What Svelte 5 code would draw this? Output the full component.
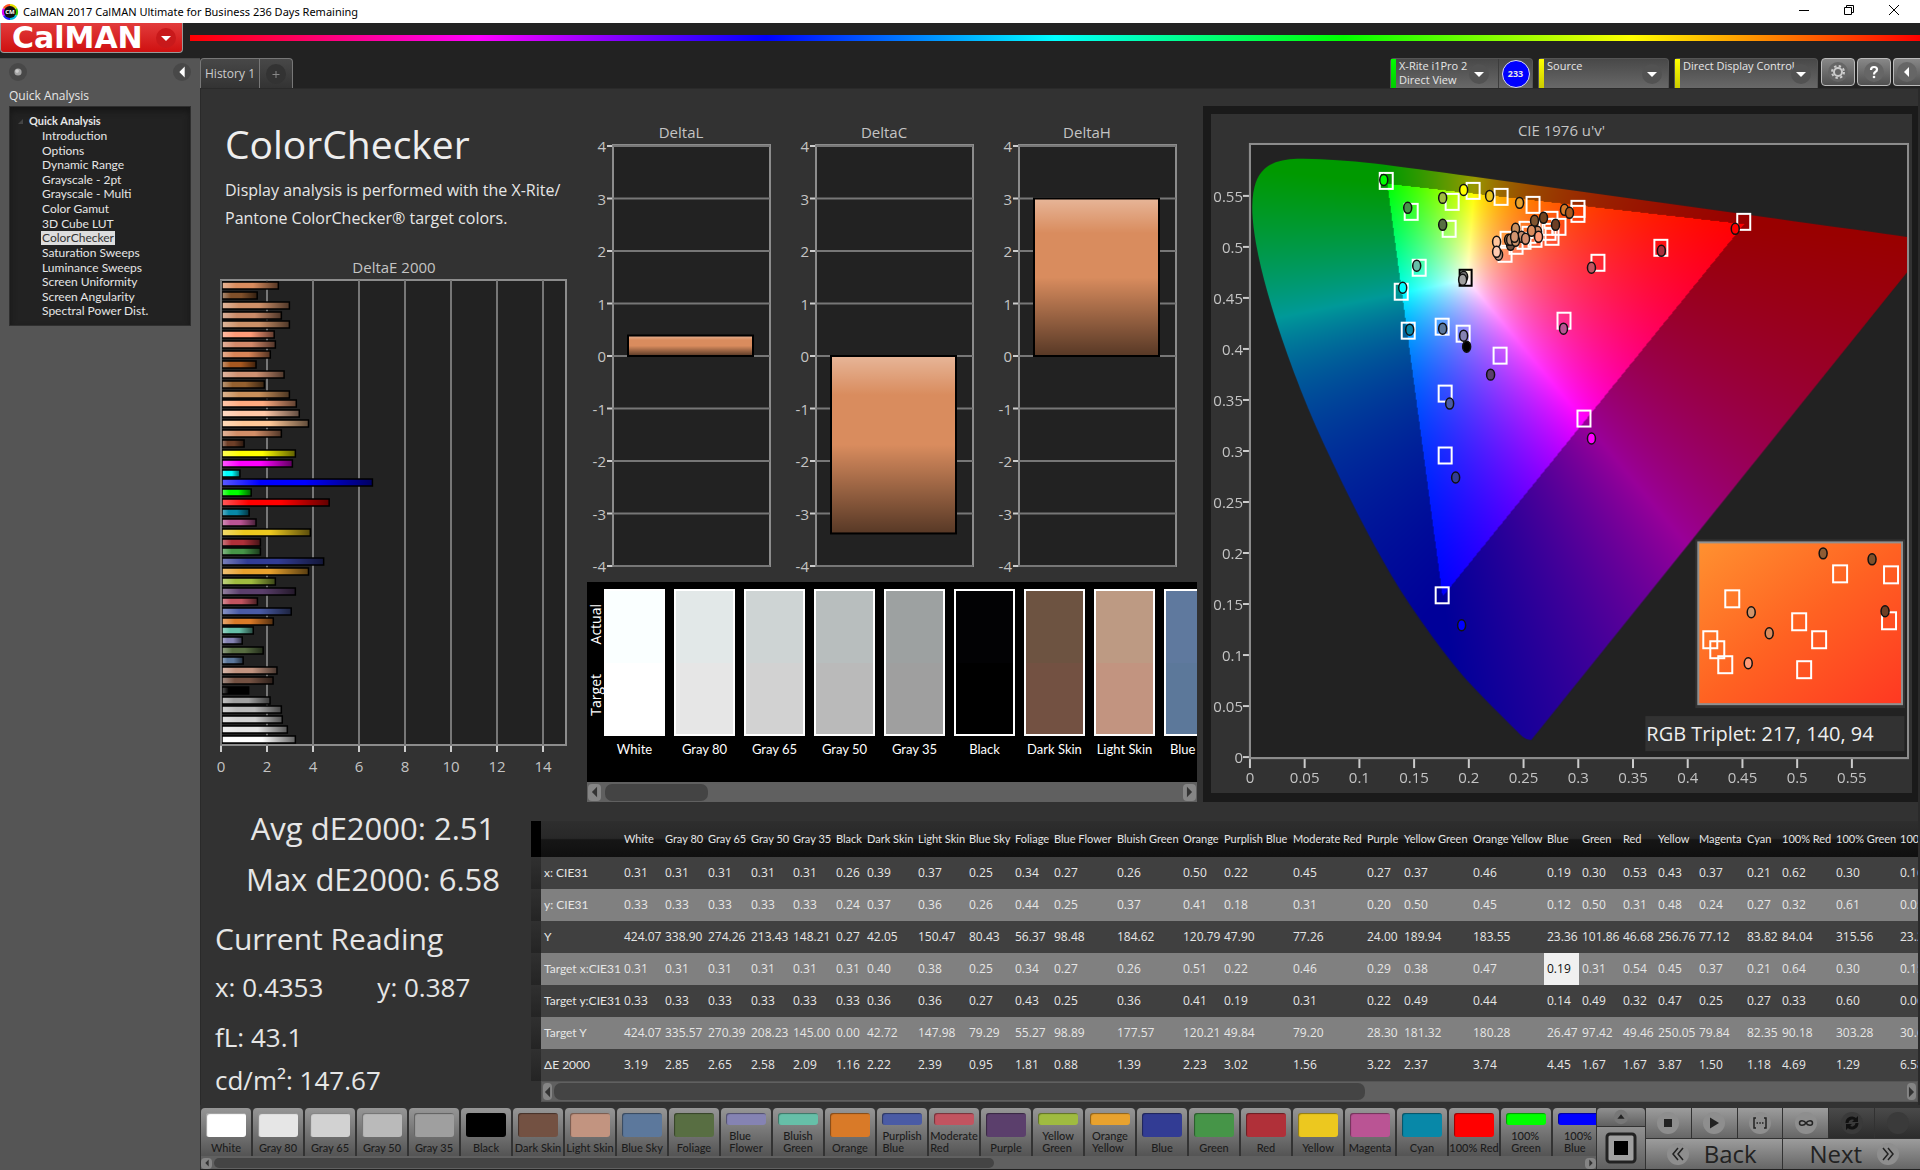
<script>
  import { onMount } from 'svelte';

  const pages = ['Introduction', 'Options', 'Dynamic Range', 'Grayscale - 2pt', 'Grayscale - Multi', 'Color Gamut', '3D Cube LUT', 'ColorChecker', 'Saturation Sweeps', 'Luminance Sweeps', 'Screen Uniformity', 'Screen Angularity', 'Spectral Power Dist.'];

  /* DeltaE 2000 per patch, top to bottom: [value, colour] */
  const deltaE = [
    [2.45, '#d98c5e'], [1.53, '#7f4f2a'], [2.93, '#cf9069'], [2.58, '#c98a68'], [2.93, '#cb9068'], [2.27, '#ff9b78'],
    [2.32, '#d3896a'], [2.1, '#d98558'], [1.48, '#a85820'], [2.7, '#d09272'], [1.84, '#94602f'], [2.93, '#c98f5a'],
    [3.23, '#ffab80'], [3.36, '#ffc8a8'], [3.76, '#ffc898'], [2.58, '#d28e68'], [0.96, '#6e3f28'], [3.19, '#ffff00'],
    [3.06, '#ff00ff'], [0.78, '#00ffff'], [6.54, '#0000ff'], [1.27, '#00ff00'], [4.66, '#ff0000'], [1.18, '#0888a8'],
    [1.48, '#ba5494'], [3.84, '#ecc81f'], [1.67, '#b03039'], [1.67, '#469548'], [4.42, '#323c94'], [3.76, '#e8a22e'],
    [2.32, '#9fbb40'], [3.19, '#5b3f6c'], [1.54, '#c25460'], [3.01, '#4a5ba5'], [2.23, '#d97a28'], [1.36, '#66bfa8'],
    [0.88, '#8583b3'], [1.79, '#586e42'], [0.92, '#5c789c'], [2.39, '#c29480'], [2.22, '#735142'], [1.16, '#000000'],
    [2.09, '#a0a0a0'], [2.58, '#bababa'], [2.62, '#d2d2d2'], [2.84, '#e6e6e6'], [3.19, '#ffffff']
  ];
  const deltas = [['DeltaL', 0.39], ['DeltaC', -3.38], ['DeltaH', 3]];
  const levels = [4, 3, 2, 1, 0, -1, -2, -3, -4];

  /* [name, measured colour, target colour] */
  const strip = [
    ['White', '#faffff', '#ffffff'], ['Gray 80', '#e2e8e8', '#e6e6e6'], ['Gray 65', '#ced4d4', '#d2d2d2'],
    ['Gray 50', '#b8bebe', '#bababa'], ['Gray 35', '#9da1a1', '#9f9f9f'], ['Black', '#020204', '#000000'],
    ['Dark Skin', '#6d5341', '#735142'], ['Light Skin', '#bd9a83', '#c29480'], ['Blue Sky', '#5f799e', '#5c789a']
  ];

  const patches = [
    ['White', '#ffffff'], ['Gray 80', '#e6e6e6'], ['Gray 65', '#d2d2d2'], ['Gray 50', '#bababa'], ['Gray 35', '#9f9f9f'],
    ['Black', '#000000'], ['Dark Skin', '#735142'], ['Light Skin', '#c29480'], ['Blue Sky', '#5c789c'], ['Foliage', '#586e42'],
    ['Blue Flower', '#8583b3'], ['Bluish Green', '#66bfa8'], ['Orange', '#d97a28'], ['Purplish Blue', '#4a5ba5'],
    ['Moderate Red', '#c25460'], ['Purple', '#5b3f6c'], ['Yellow Green', '#9fbb40'], ['Orange Yellow', '#e8a22e'],
    ['Blue', '#323c94'], ['Green', '#469548'], ['Red', '#b03039'], ['Yellow', '#ecc81f'], ['Magenta', '#ba5494'],
    ['Cyan', '#0888a8'], ['100% Red', '#ff0000'], ['100% Green', '#00ff00'], ['100% Blue', '#0000ff']
  ];
  const twoLines = (name) => /^(Blue F|Bluish|Purplish|Moderate|Yellow G|Orange Y|100% [GB])/.test(name);

  const colWidths = [80, 41, 43, 43, 42, 43, 31, 51, 51, 46, 39, 63, 66, 41, 69, 74, 37, 69, 74, 35, 41, 35, 41, 48, 35, 54, 64, 64];
  const rows = [
    ['x: CIE31', '0.31 0.31 0.31 0.31 0.31 0.26 0.39 0.37 0.25 0.34 0.27 0.26 0.50 0.22 0.45 0.27 0.37 0.46 0.19 0.30 0.53 0.43 0.37 0.21 0.62 0.30 0.16'],
    ['y: CIE31', '0.33 0.33 0.33 0.33 0.33 0.24 0.37 0.36 0.26 0.44 0.25 0.37 0.41 0.18 0.31 0.20 0.50 0.45 0.12 0.50 0.31 0.48 0.24 0.27 0.32 0.61 0.05'],
    ['Y', '424.07 338.90 274.26 213.43 148.21 0.27 42.05 150.47 80.43 56.37 98.48 184.62 120.79 47.90 77.26 24.00 189.94 183.55 23.36 101.86 46.68 256.76 77.12 83.82 84.04 315.56 23.27'],
    ['Target x:CIE31', '0.31 0.31 0.31 0.31 0.31 0.31 0.40 0.38 0.25 0.34 0.27 0.26 0.51 0.22 0.46 0.29 0.38 0.47 0.19 0.31 0.54 0.45 0.37 0.21 0.64 0.30 0.15'],
    ['Target y:CIE31', '0.33 0.33 0.33 0.33 0.33 0.33 0.36 0.36 0.27 0.43 0.25 0.36 0.41 0.19 0.31 0.22 0.49 0.44 0.14 0.49 0.32 0.47 0.25 0.27 0.33 0.60 0.06'],
    ['Target Y', '424.07 335.57 270.39 208.23 145.00 0.00 42.72 147.98 79.29 55.27 98.89 177.57 120.21 49.84 79.20 28.30 181.32 180.28 26.47 97.42 49.46 250.05 79.84 82.35 90.18 303.28 30.61'],
    ['ΔE 2000', '3.19 2.85 2.65 2.58 2.09 1.16 2.22 2.39 0.95 1.81 0.88 1.39 2.23 3.02 1.56 3.22 2.37 3.74 4.45 1.67 1.67 3.87 1.50 1.18 4.69 1.29 6.58']
  ].map(([label, values]) => ({ label, values: values.split(' ') }));

  /* Positions inside the 659 x 614 chromaticity plot */
  const targets = [
    [136, 37], [223, 47], [251, 53], [202, 58], [161, 68], [199, 85], [283, 61], [328, 65], [328, 70], [169, 124],
    [151, 148], [158, 187], [192, 183], [213, 190], [250, 212], [195, 250], [195, 312], [192, 452], [314, 177],
    [334, 275], [348, 119], [411, 104], [494, 78], [301, 76], [309, 83], [302, 93], [299, 88], [276, 86], [257, 96],
    [255, 110], [266, 102], [274, 97], [285, 95], [296, 83], [279, 91]
  ];
  const readings = [
    [134, 36, '#00ff00'], [214, 46, '#ffff00'], [240, 52, '#ecc81f'], [193, 54, '#9fbb40'], [158, 64, '#469548'],
    [193, 81, '#586e42'], [270, 59, '#e8a22e'], [315, 66, '#d97a28'], [320, 69, '#a85820'], [285, 77, '#80552f'],
    [294, 74, '#70431f'], [306, 81, '#6e3f25'], [261, 101, '#6f4f40'], [266, 85, '#c98f5e'], [288, 88, '#c98862'],
    [282, 87, '#d98c5e'], [272, 93, '#c58c6c'], [259, 96, '#a8704c'], [261, 96, '#c09070'], [266, 97, '#c98f68'],
    [265, 93, '#d2956f'], [276, 95, '#d38d6c'], [289, 93, '#ff9b78'], [247, 98, '#ffc59b'], [249, 111, '#c49882'],
    [247, 108, '#ffcbb0'], [342, 124, '#c25460'], [412, 107, '#a82f3c'], [486, 85, '#ff0000'], [167, 122, '#66bfa8'],
    [153, 144, '#00ffff'], [160, 186, '#0888a8'], [193, 185, '#5c789c'], [214, 192, '#8583b3'], [217, 203, '#000000'],
    [241, 231, '#5b3f6c'], [200, 260, '#4a5ba5'], [206, 334, '#323c94'], [212, 482, '#0000ff'], [314, 185, '#b85392'],
    [342, 295, '#ff00ff'], [214, 133, '#707070'], [213, 136, '#a0a0a0']
  ];
  const insetTargets = [[142, 32], [193, 33], [34, 57], [101, 80], [121, 98], [191, 79], [12, 98], [19, 108], [27, 123], [106, 128]];
  const insetReadings = [[125, 11, '#8e5c34'], [174, 17, '#80502a'], [53, 70, '#d0946a'], [71, 91, '#d98c5e'], [50, 121, '#ff9b78'], [187, 69, '#6e3f25']];
  const ticks = [0, 0.05, 0.1, 0.15, 0.2, 0.25, 0.3, 0.35, 0.4, 0.45, 0.5, 0.55];

  /* Spectral locus, CIE 1931 x and y */
  const locus = [
    [0.1741, 0.005], [0.1714, 0.0051], [0.1689, 0.0069], [0.1644, 0.0109], [0.1566, 0.0177], [0.144, 0.0297], [0.1241, 0.0578],
    [0.1096, 0.0868], [0.0913, 0.1327], [0.0687, 0.2007], [0.0454, 0.295], [0.0235, 0.4127], [0.0082, 0.5384], [0.0039, 0.6548],
    [0.0139, 0.7502], [0.0389, 0.812], [0.0743, 0.8338], [0.1142, 0.8262], [0.1547, 0.8059], [0.2296, 0.7543], [0.3016, 0.6923],
    [0.3731, 0.6245], [0.4441, 0.5547], [0.5125, 0.4866], [0.5752, 0.4242], [0.627, 0.3725], [0.6658, 0.334], [0.6915, 0.3083],
    [0.719, 0.2809], [0.7347, 0.2653]
  ];

  let gamut;
  const W = 659;
  const H = 614;
  const RANGE = 0.601;

  onMount(() => {
    const layer = document.createElement('canvas');
    layer.width = W;
    layer.height = H;
    const lctx = layer.getContext('2d');
    const img = lctx.createImageData(W, H);
    for (let j = 0; j < H; j++) {
      const v = ((H - j) / H) * RANGE;
      for (let i = 0; i < W; i++) {
        const u = (i / W) * RANGE;
        const X = (9 * u) / (4 * v);
        const Z = (12 - 3 * u - 20 * v) / (4 * v);
        const rgb = [
          3.2406 * X - 1.5372 - 0.4986 * Z,
          -0.9689 * X + 1.8758 + 0.0415 * Z,
          0.0557 * X - 0.204 + 1.057 * Z
        ];
        const inside = Math.min(...rgb) >= 0;
        const max = Math.max(...rgb);
        const k = (j * W + i) * 4;
        for (let n = 0; n < 3; n++) {
          img.data[k + n] = 255 * (Math.max(0, rgb[n]) / max) * (inside ? 1 : 0.6);
        }
        img.data[k + 3] = 255;
      }
    }
    lctx.putImageData(img, 0, 0);
    const ctx = gamut.getContext('2d');
    const pts = locus.map(([x, y]) => {
      const d = -2 * x + 12 * y + 3;
      return [((4 * x) / d / RANGE) * W, H - ((9 * y) / d / RANGE) * H];
    });
    ctx.beginPath();
    ctx.moveTo(...pts[0]);
    for (let i = 1; i < pts.length - 1; i++) {
      const [a, b] = pts[i];
      const [c, d] = pts[i + 1];
      ctx.quadraticCurveTo(a, b, (a + c) / 2, (b + d) / 2);
    }
    ctx.lineTo(...pts[pts.length - 1]);
    ctx.closePath();
    ctx.clip();
    ctx.drawImage(layer, 0, 0);
  });
</script>

<svelte:head><title>CalMAN 2017</title></svelte:head>

{#snippet caret()}
  <svg class="knob" viewBox="0 0 20 20" aria-hidden="true"><circle cx="10" cy="10" r="10" fill="#525252" /><path d="M5 8h10l-5 5z" fill="#fff" /></svg>
{/snippet}

{#snippet scrollbar(kind)}
  <div class="scroll {kind}">
    <button aria-label="Scroll left"><svg viewBox="0 0 8 14"><path d="M7 1v12L1 7z" fill="#333" /></svg></button>
    <div class="track"><div class="thumb"></div></div>
    <button aria-label="Scroll right"><svg viewBox="0 0 8 14"><path d="M1 1v12l6-6z" fill="#333" /></svg></button>
  </div>
{/snippet}

<div class="app">
  <header class="titlebar">
    <svg class="appicon" viewBox="0 0 16 16" aria-hidden="true">
      <path d="M8 0A8 8 0 0 1 15 4L8 8Z" fill="#e8e000" /><path d="M15 4A8 8 0 0 1 15 12L8 8Z" fill="#3c0" /><path d="M15 12A8 8 0 0 1 8 16L8 8Z" fill="#0bd" /><path d="M8 16A8 8 0 0 1 1 12L8 8Z" fill="#22f" /><path d="M1 12A8 8 0 0 1 1 4L8 8Z" fill="#d0f" /><path d="M1 4A8 8 0 0 1 8 0L8 8Z" fill="#f52" />
      <circle cx="8" cy="8" r="6" fill="#111" /><text x="8" y="10" text-anchor="middle" class="cm">CM</text>
    </svg>
    <span class="wintitle">CalMAN 2017 CalMAN Ultimate for Business 236 Days Remaining</span>
    <button class="win" aria-label="Minimize"><svg viewBox="0 0 12 12"><path d="M1 6.5h10" /></svg></button>
    <button class="win" aria-label="Restore"><svg viewBox="0 0 12 12"><path d="M1.500 3.500h7v7h-7zM3.500 3.500v-2h7v7h-2" /></svg></button>
    <button class="win" aria-label="Close"><svg viewBox="0 0 12 12"><path d="M1 1l10 10M11 1L1 11" /></svg></button>
  </header>

  <div class="brandbar">
    <button class="brand"><span>CalMAN</span><svg viewBox="0 0 20 20" aria-hidden="true"><circle cx="10" cy="10" r="10" fill="#c8191b" /><path d="M5 8h10l-5 5z" fill="#fff" /></svg></button>
    <div class="rainbow"></div>
  </div>

  <div class="body">
    <aside>
      <div class="sidetop">
        <button class="round" aria-label="Pin"><svg viewBox="0 0 20 20"><circle cx="10" cy="10" r="10" fill="#484848" /><circle cx="10" cy="10" r="4" fill="#a4a4a4" /><circle cx="9" cy="9" r="2" fill="#ccc" /></svg></button>
        <button class="round" aria-label="Collapse"><svg viewBox="0 0 20 20"><circle cx="10" cy="10" r="10" fill="#484848" /><path d="M13 4v12L7 10z" fill="#fff" /></svg></button>
      </div>
      <div class="sidetitle">Quick Analysis</div>
      <nav>
        <div class="root"><svg viewBox="0 0 6 6" aria-hidden="true"><path d="M6 0v6H0z" fill="#444" /></svg>Quick Analysis</div>
        <ul>
          {#each pages as page}
            <li><a href="#{page}" class:active={page === 'ColorChecker'}>{page}</a></li>
          {/each}
        </ul>
      </nav>
    </aside>

    <main>
      <div class="topline">
        <div class="tabs">
          <button class="tab">History 1</button>
          <button class="tab plus" aria-label="Add tab"><svg viewBox="0 0 20 20"><circle cx="10" cy="10" r="10" fill="#333" /><path d="M10 7v7M6.500 10.500h7" stroke="#888" /></svg></button>
        </div>
        <div class="devices">
          <button class="device meter"><i class="ok"></i><span>X-Rite i1Pro 2<br />Direct View</span>{@render caret()}<b class="badge">233</b></button>
          <button class="device source"><i></i><span>Source</span>{@render caret()}</button>
          <button class="device display"><i></i><span>Direct Display Control</span>{@render caret()}</button>
          <button class="tool" aria-label="Settings"><svg viewBox="0 0 20 20"><circle cx="10" cy="10" r="10" fill="#666" /><circle cx="10" cy="10" r="4" fill="none" stroke="#ccc" stroke-width="2" /><circle cx="10" cy="10" r="6" fill="none" stroke="#ccc" stroke-width="2" stroke-dasharray="2.400 2.310" /></svg></button>
          <button class="tool" aria-label="Help"><svg viewBox="0 0 20 20"><circle cx="10" cy="10" r="10" fill="#666" /><path d="M7 8q0-3 3-3t3 2.500q0 1.500-1.500 2.300T10 12.500" fill="none" stroke="#fff" stroke-width="2.200" /><circle cx="10" cy="15" r="1.300" fill="#fff" /></svg></button>
          <button class="tool cut" aria-label="Collapse panel"><svg viewBox="0 0 20 20"><circle cx="10" cy="10" r="10" fill="#666" /><path d="M12 5v10l-5-5z" fill="#fff" /></svg></button>
        </div>
      </div>

      <div class="content">
        <div class="upper">
          <section class="intro">
            <h1>ColorChecker</h1>
            <p>Display analysis is performed with the X-Rite/<br />Pantone ColorChecker® target colors.</p>
            <svg class="de" viewBox="0 0 377 530" role="img" aria-label="DeltaE 2000 chart">
              <defs>
                <linearGradient id="sheen"><stop offset="0" stop-color="#fff" stop-opacity=".35" /><stop offset=".25" stop-color="#fff" stop-opacity="0" /><stop offset=".55" stop-color="#000" stop-opacity="0" /><stop offset="1" stop-color="#000" stop-opacity=".62" /></linearGradient>
                <linearGradient id="drop" x2="0" y2="1"><stop offset="0" stop-color="#fff" stop-opacity=".36" /><stop offset=".22" stop-color="#fff" stop-opacity="0" /><stop offset=".5" stop-color="#000" stop-opacity="0" /><stop offset="1" stop-color="#000" stop-opacity=".6" /></linearGradient>
              </defs>
              <text x="193" y="25" class="ct mid">DeltaE 2000</text>
              <rect x="20" y="32" width="345" height="465" class="plot" />
              {#each [0, 2, 4, 6, 8, 10, 12, 14] as t}
                <path d="M{20 + t * 23} 32V497" class="grid" /><path d="M{20 + t * 23} 498v6" class="tick" />
                <text x={20 + t * 23} y="524" class="ct mid">{t}</text>
              {/each}
              {#each deltaE as [v, c], i}
                <rect x="21" y={34 + Math.round(i * 9.87)} width={v * 23} height="7" fill={c} /><rect x="21" y={34 + Math.round(i * 9.87)} width={v * 23} height="7" fill="url(#sheen)" stroke="#000" stroke-width="1.500" />
              {/each}
              <path d="M20 32V497" class="grid" />
            </svg>
          </section>

          <section class="centre">
            <div class="deltas">
              {#each deltas as [name, v]}
                <svg viewBox="0 0 203 464" role="img" aria-label={name}>
                  <text x="103" y="28" class="ct mid">{name}</text>
                  <rect x="35" y="35" width="157" height="421" class="plot" />
                  {#each levels as n}
                    <path d="M35 {246 - n * 52.5}H192" class="grid" /><path d="M29 {246 - n * 52.5}h5" class="tick" />
                    <text x="28" y={252 - n * 52.5} class="ct end">{n}</text>
                  {/each}
                  <rect x="50" y={v > 0 ? 246 - v * 52.5 : 246} width="125" height={Math.abs(v) * 52.5} fill="#d98c5e" />
                  <rect x="50" y={v > 0 ? 246 - v * 52.5 : 246} width="125" height={Math.abs(v) * 52.5} fill="url(#drop)" stroke="#000" stroke-width="2" />
                </svg>
              {/each}
            </div>
            <div class="compare">
              <div class="sides"><span>Actual</span><span>Target</span></div>
              <div class="strip">
                {#each strip as [name, actual, target]}
                  <figure><div class="chip"><div style:background={actual}></div><div style:background={target}></div></div><figcaption>{name}</figcaption></figure>
                {/each}
              </div>
            </div>
            {@render scrollbar('s1')}
          </section>

          <section class="cie">
            <svg viewBox="0 0 702 680" role="img" aria-label="CIE 1976 chromaticity chart">
              <defs><linearGradient id="zoomfill" x2="1" y2="1"><stop offset="0" stop-color="#ff9130" /><stop offset=".5" stop-color="#ff6222" /><stop offset="1" stop-color="#ff3822" /></linearGradient></defs>
              <text x="351" y="22" class="ct mid">CIE 1976 u'v'</text>
              <g transform="translate(39 30)">
                <rect width="659" height="615" class="plot" />
                <foreignObject width="659" height="614"><canvas bind:this={gamut} width={W} height={H}></canvas></foreignObject>
                <rect width="659" height="615" fill="none" stroke="#8c8c8c" stroke-width="2" />
                {#each ticks as t}
                  <path d="M{t * 1096} 616v9" class="tick" /><text x={t * 1096} y="640" class="ct mid">{t}</text>
                  <path d="M-7 {614 - t * 1021.8}h6" class="tick" /><text x="-7" y={620 - t * 1021.8} class="ct end">{t}</text>
                {/each}
                {#each targets as [x, y]}<rect x={x - 6} y={y - 8} width="13" height="16" class="target" />{/each}
                <rect x="210" y="126" width="12" height="16" fill="none" stroke="#000" stroke-width="2" />
                {#each readings as [x, y, c]}<ellipse cx={x} cy={y} rx="4" ry="5.500" fill={c} class="dot" />{/each}
                <rect x="446" y="396" width="210" height="169" fill="#323232" />
                <g transform="translate(449 399)">
                  <rect width="204" height="162" fill="url(#zoomfill)" stroke="#909090" stroke-width="2" />
                  {#each insetTargets as [x, y]}<rect x={x - 7} y={y - 9} width="14" height="17" class="target" />{/each}
                  {#each insetReadings as [x, y, c]}<ellipse cx={x} cy={y} rx="4" ry="5.500" fill={c} class="dot" />{/each}
                </g>
                <rect x="396" y="573" width="259" height="35" fill="#323232" />
                <text x="397" y="598" class="triplet">RGB Triplet: 217, 140, 94</text>
              </g>
            </svg>
          </section>
        </div>

        <div class="lower">
          <section class="stats">
            <div class="big">Avg dE2000: 2.51</div>
            <div class="big">Max dE2000: 6.58</div>
            <h2>Current Reading</h2>
            <div class="pair"><span>x: 0.4353</span><span>y: 0.387</span></div>
            <div class="lum">fL: 43.1</div>
            <div class="lum last">cd/m²: 147.67</div>
          </section>
          <section class="data">
            <div class="tablewrap">
              <table>
                <colgroup><col class="gutter" />{#each colWidths as w}<col style:width="{w}px" />{/each}</colgroup>
                <thead><tr><td></td><td></td>{#each patches as [name]}<th scope="col">{name}</th>{/each}</tr></thead>
                <tbody>
                  {#each rows as row}
                    <tr><td></td><th scope="row">{row.label}</th>
                      {#each row.values as v, i}<td class:picked={row.label === 'Target x:CIE31' && i === 18}>{v}</td>{/each}
                    </tr>
                  {/each}
                </tbody>
              </table>
            </div>
            {@render scrollbar('s2')}
          </section>
        </div>
      </div>

      <footer>
        <div class="patchbar">
          <div class="patches">
            {#each patches as [name, color]}
              <button class="patch" class:two={twoLines(name)}><i style:background={color}></i><span>{name}</span></button>
            {/each}
          </div>
          {@render scrollbar('s3')}
        </div>
        <div class="pattern">
          <button aria-label="Expand"><svg viewBox="0 0 20 20"><circle cx="10" cy="10" r="8" fill="#777" /><path d="M6 12h8l-4-5z" fill="#222" /></svg></button>
          <button aria-label="Pattern window"><svg viewBox="0 0 32 32"><rect x="2" y="2" width="28" height="28" rx="3" fill="#a0a0a0" stroke="#222" stroke-width="3" /><rect x="9" y="9" width="14" height="14" fill="#000" /></svg></button>
        </div>
        <div class="transport">
          <button aria-label="Stop"><svg viewBox="0 0 24 24"><circle cx="12" cy="12" r="11" /><path d="M8 8h8v8H8z" fill="#222" /></svg></button>
          <button aria-label="Play"><svg viewBox="0 0 24 24"><circle cx="12" cy="12" r="11" /><path d="M8 6.500v11l9-5.500z" fill="#222" /></svg></button>
          <button aria-label="Read series"><svg viewBox="0 0 24 24"><circle cx="12" cy="12" r="11" /><path d="M8 7H6v10h2M16 7h2v10h-2M8.500 12h1.500M11.300 12h1.500M14 12h1.500" class="ink" /></svg></button>
          <button aria-label="Continuous"><svg viewBox="0 0 24 24"><circle cx="12" cy="12" r="11" /><path d="M12 12c-2-3-6.500-3-6.500 0s4.500 3 6.500 0 6.500-3 6.500 0-4.500 3-6.500 0z" class="ink" /></svg></button>
          <button class="off" aria-label="Refresh"><svg viewBox="0 0 24 24"><circle cx="12" cy="12" r="11" /><path d="M7 12a5 5 0 0 1 9-3M17 12a5 5 0 0 1-9 3" class="ink thick" /><path d="M18 5v6h-6zM6 19v-6h6z" fill="#111" /></svg></button>
          <button class="off" aria-label="Record"><svg viewBox="0 0 24 24"><circle cx="12" cy="12" r="11" /></svg></button>
          <button class="step back"><svg viewBox="0 0 24 24"><circle cx="12" cy="12" r="11" /><path d="M12 6l-5 6 5 6M17 6l-5 6 5 6" class="ink" /></svg>Back</button>
          <button class="step next">Next<svg viewBox="0 0 24 24"><circle cx="12" cy="12" r="11" /><path d="M7 6l5 6-5 6M12 6l5 6-5 6" class="ink" /></svg></button>
        </div>
      </footer>
    </main>
  </div>
</div>

<style>
  :global(body) { background: #222; }
  .app { font-family: "Open Sans", "Noto Sans", sans-serif; color: #e6e6e6; min-height: 100vh; display: flex; flex-direction: column; overflow: hidden; }
  .app * { box-sizing: border-box; }
  button { font: inherit; color: inherit; border: 0; padding: 0; margin: 0; background: none; display: flex; align-items: center; justify-content: center; }
  svg { display: block; overflow: visible; }

  .titlebar { height: 23px; background: #fff; color: #000; display: flex; align-items: center; padding: 0 4px 4px 2px; }
  .appicon { width: 16px; height: 16px; margin: 4px 5px 0 0; }
  .cm { font-size: 6px; font-weight: bold; fill: #fff; }
  .wintitle { font: 11px/19px "Noto Sans", sans-serif; flex: 1; padding-top: 4px; }
  .win { width: 45px; height: 19px; }
  .win svg { width: 12px; height: 12px; fill: none; stroke: #000; }

  .brandbar { height: 35px; display: flex; background: #222; }
  .brand { width: 183px; height: 30px; background: linear-gradient(#e23c3c, #cf1010); border: 1px solid #999; border-top: 0; border-radius: 0 0 4px 4px; justify-content: space-between; padding: 0 6px 0 11px; }
  .brand span { font: bold 30px/28px "DejaVu Sans", sans-serif; color: #fff; }
  .brand svg { width: 20px; height: 20px; }
  .rainbow { flex: 1; height: 6px; margin: 12px 0 0 7px; background: linear-gradient(90deg, #f00, #f0f, #00f, #0ff, #0f0, #ff0, #f00); }

  .body { flex: 1; display: flex; min-width: 0; }
  aside { width: 200px; flex: none; background: #555; padding: 3px 9px; font-size: 13px; border-top: 1px solid #4a4a4a; }
  .sidetop { display: flex; justify-content: space-between; margin-bottom: 5px; }
  .round svg { width: 18px; height: 20px; }
  .sidetitle { font: 12px/18px "Open Sans", sans-serif; margin-bottom: 1px; }
  nav { background: #222; border: 1px solid #2f2f2f; height: 220px; padding: 7px 8px; box-shadow: inset 0 4px 6px #161616; }
  .root { font: bold 11px/14px Lato, sans-serif; display: flex; align-items: center; gap: 6px; }
  .root svg { width: 5px; height: 5px; }
  ul { list-style: none; margin: 1px 0 0 23px; padding: 0; display: grid; height: 190px; grid-auto-rows: 1fr; }
  li { font: 12px/14px Lato, sans-serif; }
  li a { color: #e6e6e6; text-decoration: none; padding: 0 1px; display: inline-block; }
  li a.active { background: #ddd; color: #333; }

  main { flex: 1; min-width: 0; display: flex; flex-direction: column; }
  .topline { height: 30px; display: flex; justify-content: space-between; background: #222; overflow: hidden; }
  .tabs { display: flex; border: 1px solid #777; border-bottom: 0; border-radius: 4px 4px 0 0; background: linear-gradient(#484848, #333); }
  .tab { width: 58px; font-size: 12px; color: #ccc; }
  .tab.plus { width: 33px; border-left: 1px solid #777; }
  .plus svg { width: 20px; height: 20px; }
  .devices { display: flex; align-items: flex-start; }
  .device { height: 30px; background: linear-gradient(#484848, #686868); border: 1px solid #555; border-bottom: 0; border-radius: 4px 4px 0 0; justify-content: flex-start; align-items: stretch; margin-right: 5px; }
  .device i { width: 5px; flex: none; background: linear-gradient(#ff0, #cc0); }
  .device i.ok { background: linear-gradient(#0f0, #0c0); }
  .device span { flex: 1; min-width: 0; text-align: left; font: 11px/14px "Open Sans", sans-serif; padding-left: 3px; white-space: nowrap; }
  .knob { width: 20px; height: 20px; align-self: center; margin-right: 6px; flex: none; }
  .meter { width: 143px; }
  .meter .knob { margin-right: 9px; }
  .source { width: 131px; }
  .display { width: 144px; margin-right: 3px; }
  .badge { border-left: 1px solid #3c3c3c; width: 34px; flex: none; display: grid; place-items: center; font: bold 9px/23px "Open Sans", sans-serif; position: relative; z-index: 0; }
  .badge::before { content: ""; position: absolute; z-index: -1; width: 26px; height: 26px; border-radius: 50%; background: #00f; border: 1px solid #dde; }
  .tool { width: 34px; height: 28px; margin-right: 2px; border: 1px solid #bbb; border-radius: 4px; background: linear-gradient(#888, #505050); }
  .tool.cut { width: 27px; border-right: 0; border-radius: 4px 0 0 4px; margin: 0; }
  .tool svg { width: 20px; height: 20px; }

  .content { flex: 1; background: #323232; border: 1px solid #2a2a2a; border-width: 1px 2px 0 1px; }
  .upper { display: flex; height: 714px; align-items: flex-start; }
  .intro { width: 377px; flex: none; }
  h1 { font: 39px/50px "Open Sans", sans-serif; margin: 30px 0 0 24px; color: #eee; }
  p { margin: 7px 0 16px 24px; font-size: 16px; line-height: 28px; white-space: nowrap; }
  .de { width: 100%; }
  .plot { fill: #222; stroke: #8c8c8c; stroke-width: 2; }
  .grid { stroke: #777; stroke-width: 2; fill: none; }
  .tick { stroke: #ccc; stroke-width: 2; fill: none; }
  .ct { fill: #c4c4c4; font-size: 15px; }
  .mid { text-anchor: middle; }
  .end { text-anchor: end; }

  .centre { width: 619px; flex: none; padding-top: 21px; }
  .deltas { display: flex; }
  .deltas svg { width: 203px; }
  .compare { margin: 8px 0 0 9px; width: 610px; height: 200px; background: #000; display: flex; overflow: hidden; }
  .sides { width: 17px; padding: 7px 0 52px; display: flex; flex-direction: column; justify-content: space-around; align-items: center; flex: none; }
  .sides span { writing-mode: vertical-rl; transform: rotate(180deg); font-size: 14px; line-height: 16px; color: #fff; }
  .strip { display: flex; gap: 9px; padding-top: 7px; }
  figure { margin: 0; width: 61px; flex: none; }
  .chip { height: 147px; border: 2px solid #fff; display: flex; flex-direction: column; }
  .chip div { flex: 1; }
  figcaption { font: 13px/26px Lato, sans-serif; text-align: center; color: #fff; white-space: nowrap; }

  .scroll { display: flex; align-items: center; background: #606060; height: 20px; padding: 0 1px; gap: 4px; }
  .scroll button { width: 13px; height: 17px; border-radius: 4px; background: #858585; flex: none; }
  .scroll svg { width: 7px; height: 12px; }
  .track { flex: 1; height: 17px; }
  .thumb { height: 100%; border-radius: 7px; background: #444; }
  .s1 { margin-left: 9px; width: 610px; }
  .s1 .thumb { width: 18%; }
  .s2 { margin-left: 10px; height: 21px; border: 1px solid #555; gap: 2px; }
  .s2 button { width: 9px; }
  .s2 .thumb { width: 60%; }
  .s3 { height: 12px; margin-top: 1px; gap: 2px; padding: 0; }
  .s3 button { width: 11px; height: 11px; }
  .s3 svg { width: 6px; height: 8px; }
  .s3 .track { height: 10px; }
  .s3 .thumb { width: 57%; }

  .cie { flex: 1; min-width: 0; margin: 17px 0 0 6px; border: solid #1a1a1a; border-width: 8px 6px 9px 8px; background: #323232; }
  .cie svg { width: 100%; }
  canvas { display: block; }
  .target { fill: none; stroke: #fff; stroke-width: 2; }
  .dot { stroke: #111; stroke-width: 1.5; }
  .triplet { fill: #eee; font-size: 20px; }

  .lower { display: flex; }
  .stats { width: 330px; flex: none; padding-left: 14px; font-size: 26px; white-space: nowrap; }
  .big { font-size: 31px; line-height: 51px; text-align: center; }
  h2 { font-size: 30px; line-height: 40px; font-weight: normal; margin: 14px 0 0; }
  .pair { display: flex; gap: 54px; line-height: 56px; }
  .lum { line-height: 44px; }
  .lum.last { line-height: 42px; }
  .data { flex: 1; min-width: 0; padding-top: 18px; }
  .tablewrap { overflow: hidden; }
  table { border-collapse: collapse; table-layout: fixed; width: 1430px; font-size: 12px; }
  .gutter { width: 10px; }
  td, th { padding: 0 0 0 3px; height: 32px; font-weight: normal; text-align: left; white-space: nowrap; line-height: 32px; overflow: visible; }
  thead th, thead td { height: 36px; background: linear-gradient(#2e2e2e, #282828 48%, #161616 52%, #0f0f0f); }
  thead th { font: 11px/32px Lato, sans-serif; }
  tbody th { font: 12px/32px Lato, sans-serif; }
  thead td:first-child { background: #000; }
  tbody tr { background: #404040; }
  tbody tr:nth-child(even) { background: #808080; }
  tbody td:first-child { background: linear-gradient(#303030, #242424); }
  td.picked { background: #f0f0f0; color: #111; }

  footer { height: 65px; display: flex; padding: 3px 0 0 1px; background: #323232; border-bottom: 1px solid #222; }
  .patchbar { flex: 1; min-width: 0; background: #606060; }
  .patches { display: flex; gap: 2px; overflow: hidden; background: #333; height: 48px; }
  .patch { width: 50px; flex: none; flex-direction: column; justify-content: space-between; background: linear-gradient(#969696, #545454); border-radius: 4px 4px 0 0; padding: 5px 0 2px; color: #1c1c1c; }
  .patch i { width: 40px; height: 24px; flex: none; border-radius: 3px; box-shadow: inset 1px 1px 1px rgba(0, 0, 0, .4); }
  .patch span { font: 500 11px/12px Lato, sans-serif; white-space: nowrap; }
  .patch.two i { height: 12px; }
  .patch.two span { white-space: normal; width: min-content; text-align: left; }
  .pattern { width: 48px; margin-left: 1px; display: flex; flex-direction: column; gap: 1px; }
  .pattern button { background: linear-gradient(#909090, #606060); flex: 1; }
  .pattern button:first-child { flex: 0 0 18px; border-radius: 4px 4px 0 0; }
  .pattern button:first-child svg { width: 18px; height: 18px; }
  .pattern button:last-child svg { width: 32px; height: 32px; }
  .transport { width: 274px; margin-left: 1px; display: grid; grid-template-columns: repeat(6, 1fr); grid-template-rows: 30px 30px; gap: 1px; color: #222; }
  .transport button { background: linear-gradient(#9c9c9c, #666); }
  .transport svg { width: 24px; height: 24px; fill: #8e8e8e; }
  .transport button.off { background: linear-gradient(#4a4a4a, #2c2c2c); }
  .transport .off svg { fill: #3a3a3a; }
  .ink { fill: none; stroke: #222; stroke-width: 1.5; }
  .thick { stroke: #111; stroke-width: 3; }
  .transport button.step { grid-column: span 3; font-size: 24px; line-height: 28px; gap: 14px; }
  .transport button.back { padding-right: 6px; }
  .transport button.next { padding-left: 6px; }
</style>
